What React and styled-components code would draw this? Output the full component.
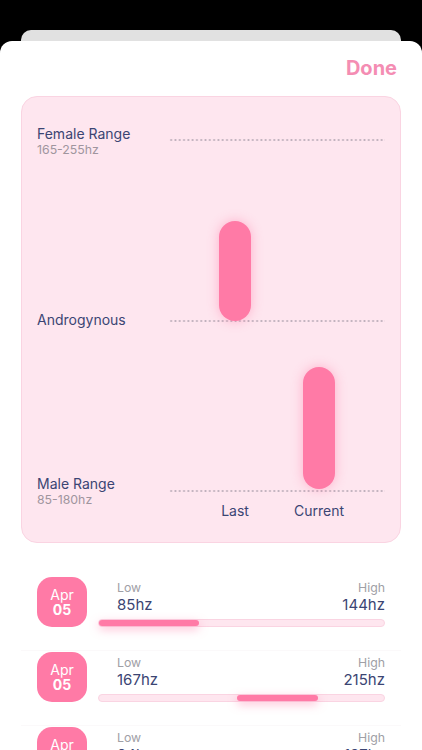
import React from 'react'
import styled, { createGlobalStyle } from 'styled-components';

const Global = createGlobalStyle`
  html, body {
    margin: 0;
    padding: 0;
    background: #000;
  }
  body {
    font-family: 'Inter', 'Liberation Sans', sans-serif;
    -webkit-font-smoothing: antialiased;
  }
`;

const PINK = '#ff7aa6';
const NAVY = '#3b4573';

const Screen = styled.div`
  width: 422px;
  height: 750px;
  overflow: hidden;
  background: #000;
  padding-top: 30px;
  box-sizing: border-box;
  display: flex;
  flex-direction: column;
`;

const BackSheet = styled.div`
  height: 11px;
  margin: 0 21px;
  background: #e1e1e1;
  border-radius: 10px 10px 0 0;
  flex-shrink: 0;
`;

const Sheet = styled.div`
  flex: 1;
  background: #fff;
  border-radius: 12px 12px 0 0;
  display: flex;
  flex-direction: column;
`;

const Header = styled.div`
  height: 55px;
  display: flex;
  justify-content: flex-end;
  align-items: center;
  padding: 0 25px 2px 0;
  box-sizing: border-box;
`;

const DoneButton = styled.button`
  border: none;
  background: none;
  padding: 0;
  font-family: inherit;
  font-size: 20px;
  font-weight: 700;
  color: #f48db3;
  cursor: pointer;
`;

const ChartCard = styled.div`
  margin: 0 21px;
  height: 447px;
  box-sizing: border-box;
  background: #fee6ef;
  border: 1px solid #fad4e2;
  border-radius: 16px;
  padding: 0 15px;
  display: flex;
  flex-direction: column;
`;

const Plot = styled.div`
  position: relative;
  height: 405px;
`;

const LevelLabel = styled.div`
  position: absolute;
  left: 0;
  display: flex;
  flex-direction: column;
  gap: 1px;
`;

const LevelTitle = styled.span`
  font-size: 14px;
  line-height: 16px;
  color: ${NAVY};
`;

const LevelSub = styled.span`
  font-size: 12.3px;
  line-height: 14px;
  color: #a0959e;
`;

const DottedLine = styled.div`
  position: absolute;
  left: 132px;
  right: 0;
  height: 2px;
  background-image: radial-gradient(circle, #bfb0bc 0.85px, transparent 1.15px);
  background-size: 4.3px 2px;
  background-repeat: repeat-x;
`;

const Bar = styled.div`
  position: absolute;
  width: 32px;
  border-radius: 16px;
  background: ${PINK};
  box-shadow: 0 0 12px rgba(255, 110, 160, 0.45);
  transform: translateX(-50%);
`;

const AxisRow = styled.div`
  position: relative;
  height: 20px;
  margin-left: 132px;
`;

const AxisLabel = styled.span`
  position: absolute;
  top: 0;
  transform: translateX(-50%);
  font-size: 14px;
  line-height: 18px;
  color: ${NAVY};
`;

const List = styled.div`
  margin-top: 33px;
  display: flex;
  flex-direction: column;
`;

const Row = styled.div`
  display: flex;
  align-items: flex-start;
  gap: 11px;
  height: 75px;
  margin: 0 21px;
  padding: 1px 16px 0 16px;
  box-sizing: border-box;
  border-bottom: 1px solid #fbf9fa;
`;

const DateBadge = styled.div`
  width: 50px;
  height: 50px;
  flex-shrink: 0;
  border-radius: 15px;
  background: ${PINK};
  color: #fff;
  display: flex;
  flex-direction: column;
  align-items: center;
  justify-content: center;
  font-size: 14px;
  line-height: 15px;
`;

const Day = styled.span`
  font-weight: 700;
`;

const Info = styled.div`
  flex: 1;
  display: flex;
  flex-direction: column;
  padding-top: 2px;
`;

const Values = styled.div`
  display: flex;
  justify-content: space-between;
  padding-left: 19px;
`;

const ValueCol = styled.div`
  display: flex;
  flex-direction: column;
  align-items: ${({ $right }) => ($right ? 'flex-end' : 'flex-start')};
`;

const ValueLabel = styled.span`
  font-size: 12.3px;
  line-height: 17px;
  color: #a0a0a6;
`;

const Value = styled.span`
  font-size: 15px;
  line-height: 17px;
  color: ${NAVY};
`;

const Track = styled.div`
  position: relative;
  margin-top: 6px;
  height: 8px;
  box-sizing: border-box;
  border-radius: 4px;
  background: #fee6ef;
  border: 1px solid #fad4e2;
`;

const Fill = styled.div`
  position: absolute;
  top: 0;
  height: 6px;
  border-radius: 3px;
  background: ${PINK};
  box-shadow: 0 3px 10px rgba(255, 110, 160, 0.5);
`;

const levels = [
  { title: 'Female Range', sub: '165-255hz', line: 42, label: 29 },
  { title: 'Androgynous', line: 223, label: 215 },
  { title: 'Male Range', sub: '85-180hz', line: 393, label: 379 },
];

const bars = [
  { name: 'Last', x: 66, top: 124, bottom: 224 },
  { name: 'Current', x: 150, top: 270, bottom: 392 },
];

const history = [
  { month: 'Apr', day: '05', low: 85, high: 144, from: 0, to: 0.35 },
  { month: 'Apr', day: '05', low: 167, high: 215, from: 0.485, to: 0.77 },
  { month: 'Apr', day: '05', low: 94, high: 187, from: 0.1, to: 0.6 },
];

const App = () => {
  return (
    <Screen>
      <Global />
      <BackSheet />
      <Sheet>
        <Header>
          <DoneButton>Done</DoneButton>
        </Header>
        <ChartCard>
          <Plot>
            {levels.map((l) => (
              <React.Fragment key={l.title}>
                <LevelLabel style={{ top: l.label }}>
                  <LevelTitle>{l.title}</LevelTitle>
                  {l.sub && <LevelSub>{l.sub}</LevelSub>}
                </LevelLabel>
                <DottedLine style={{ top: l.line }} />
              </React.Fragment>
            ))}
            {bars.map((b) => (
              <Bar
                key={b.name}
                style={{ left: 132 + b.x, top: b.top, height: b.bottom - b.top }}
              />
            ))}
          </Plot>
          <AxisRow>
            {bars.map((b) => (
              <AxisLabel key={b.name} style={{ left: b.x }}>{b.name}</AxisLabel>
            ))}
          </AxisRow>
        </ChartCard>
        <List>
          {history.map((h, i) => (
            <Row key={i}>
              <DateBadge>
                <span>{h.month}</span>
                <Day>{h.day}</Day>
              </DateBadge>
              <Info>
                <Values>
                  <ValueCol>
                    <ValueLabel>Low</ValueLabel>
                    <Value>{h.low}hz</Value>
                  </ValueCol>
                  <ValueCol $right>
                    <ValueLabel>High</ValueLabel>
                    <Value>{h.high}hz</Value>
                  </ValueCol>
                </Values>
                <Track>
                  <Fill style={{ left: `${h.from * 100}%`, width: `${(h.to - h.from) * 100}%` }} />
                </Track>
              </Info>
            </Row>
          ))}
        </List>
      </Sheet>
    </Screen>
  );
};

export default App;
